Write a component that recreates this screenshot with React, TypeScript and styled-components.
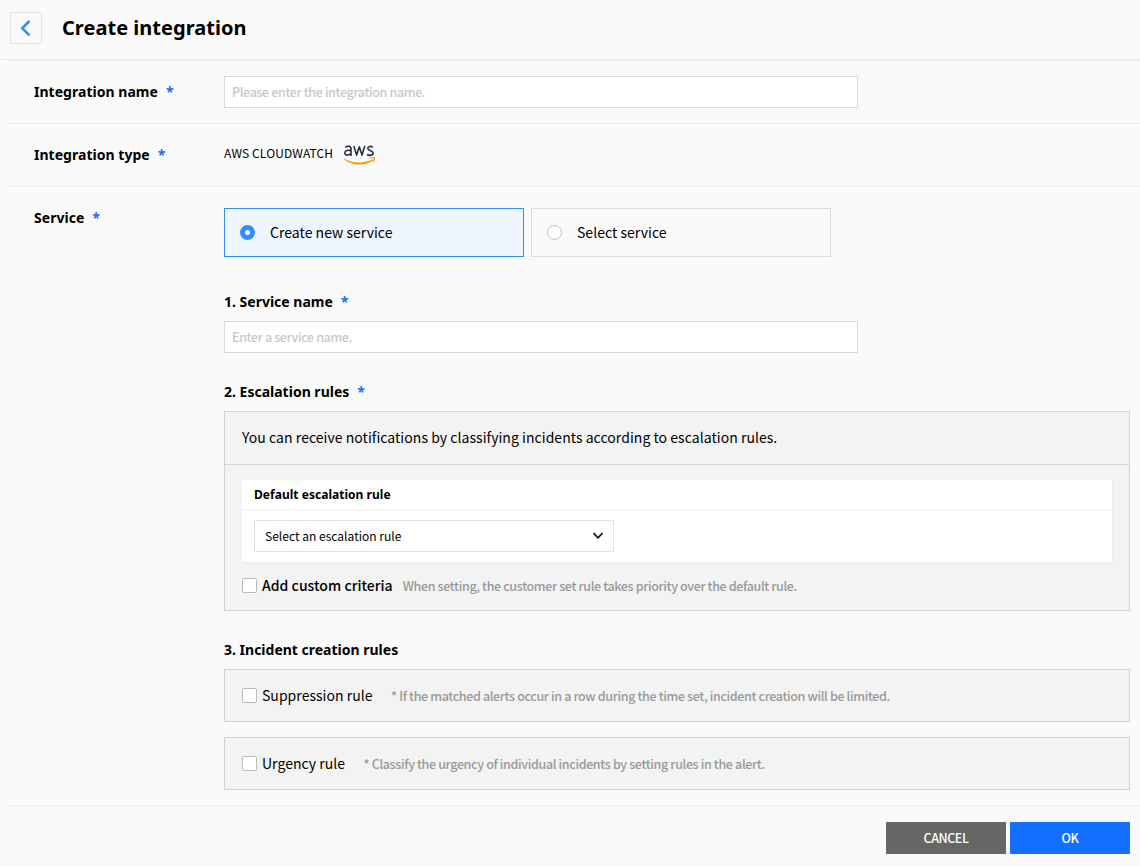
import React from 'react';
import styled, { createGlobalStyle } from 'styled-components';

const GlobalStyle = createGlobalStyle`
  *, *::before, *::after { box-sizing: border-box; }
  body {
    margin: 0;
    background: #fafafa;
    color: #000;
    font-family: 'Noto Sans CJK KR', 'Noto Sans', sans-serif;
    font-size: 14px;
  }
  input, button { font-family: inherit; }
`;

const Page = styled.div`
  width: 1140px;
  height: 866px;
  background: #fafafa;
  overflow: hidden;
`;

const Header = styled.header`
  display: flex;
  height: 60px;
  padding: 12px 10px 0;
  border-bottom: 1px solid #ebebeb;
`;

const BackButton = styled.button`
  display: flex;
  align-items: center;
  justify-content: center;
  width: 32px;
  height: 32px;
  padding: 0;
  border: 1px solid #e5e5e5;
  background: #fafafa;
`;

const PageTitle = styled.h1`
  margin: 0 0 0 20px;
  font: 700 20px/32px 'Noto Sans', sans-serif;
  letter-spacing: 0.03px;
`;

const Form = styled.main`
  margin-left: 9px;
  border-top: 1px solid #ebebeb;
`;

const Row = styled.section<{ $height: number }>`
  display: flex;
  height: ${(p) => p.$height}px;
  border-bottom: 1px solid #ebebeb;
`;

const RowLabel = styled.div`
  flex: none;
  width: 215px;
  padding: 20px 0 0 25px;
  font: 700 14px/22px 'Noto Sans', sans-serif;
  letter-spacing: 0.03px;
`;

const RowBody = styled.div`
  flex: 1;
  padding: 15px 10px 0 0;
`;

const Required = styled.span`
  margin-left: 8px;
  color: #1a6cff;
`;

const TextInput = styled.input`
  display: block;
  width: 634px;
  height: 32px;
  padding: 0 7px 1px;
  border: 1px solid #d9d9d9;
  border-radius: 0;
  background: #fff;
  font-size: 12.5px;
  letter-spacing: -0.36px;
  &::placeholder { color: #c8c8c8; font-weight: 500; }
`;

const TypeValue = styled.div`
  display: flex;
  height: 32px;
  align-items: flex-start;
  font-size: 12px;
  line-height: 28px;
  letter-spacing: 0.12px;
  gap: 10px;
  svg { margin-top: 4px; }
`;

const Choices = styled.div`
  display: flex;
  gap: 7px;
  margin-top: 6px;
`;

const Choice = styled.div<{ $active?: boolean }>`
  display: flex;
  align-items: center;
  width: 300px;
  height: 49px;
  padding-left: 15px;
  gap: 15px;
  font-size: 14px;
  letter-spacing: 0.03px;
  border: 1px solid ${(p) => (p.$active ? '#2a8ff7' : '#dcdcdc')};
  background: ${(p) => (p.$active ? '#eff5ff' : '#fafafa')};
`;

const ChoiceLabel = styled.span`
  padding-bottom: 2px;
`;

const Radio = styled.span<{ $active?: boolean }>`
  width: 15px;
  height: 15px;
  border-radius: 50%;
  border: ${(p) => (p.$active ? '5px solid #2f90f8' : '1px solid #bfbfbf')};
  background: #fff;
`;

const SectionTitle = styled.h2<{ $top: number }>`
  margin: ${(p) => p.$top}px 0 8px;
  font: 700 14px/22px 'Noto Sans', sans-serif;
`;

const Panel = styled.div`
  border: 1px solid #d2d2d2;
  background: #f3f3f3;
  & + & { margin-top: 15px; }
`;

const PanelIntro = styled.p`
  margin: 0;
  height: 53px;
  padding-left: 17px;
  border-bottom: 1px solid #d7d7d7;
  font-size: 14px;
  line-height: 51px;
  letter-spacing: 0.045px;
`;

const PanelContent = styled.div`
  height: 145px;
  padding: 15px 17px 0;
`;

const RuleCard = styled.div`
  height: 82px;
  background: #fff;
  box-shadow: 1px 1px 1px rgba(0, 0, 0, 0.03);
`;

const RuleCardTitle = styled.h3`
  margin: 0;
  height: 30px;
  padding-left: 12px;
  border-bottom: 1px solid #f0f0f0;
  font: 700 12px/29px 'Noto Sans', sans-serif;
  letter-spacing: 0.03px;
`;

const SelectBox = styled.div`
  display: flex;
  align-items: flex-start;
  justify-content: space-between;
  width: 360px;
  height: 32px;
  margin: 10px 0 0 12px;
  padding: 0 9px 0 10px;
  border: 1px solid #e3e3e3;
  font-size: 12px;
  line-height: 30px;
  letter-spacing: 0.02px;
  svg { margin-top: 11px; }
`;

const CheckRow = styled.label<{ $height: number }>`
  display: flex;
  align-items: center;
  height: ${(p) => p.$height}px;
`;

const PanelCheckRow = styled(CheckRow)`
  padding-left: 17px;
`;

const Checkbox = styled.span`
  width: 15px;
  height: 15px;
  border: 1px solid #bababa;
  border-radius: 2px;
  background: #fff;
`;

const CheckLabel = styled.span<{ $weight?: number }>`
  margin-left: 5px;
  padding-bottom: 2px;
  font-size: 14px;
  letter-spacing: 0.03px;
  font-weight: ${(p) => p.$weight ?? 400};
`;

const Hint = styled.span<{ $gap: number }>`
  margin-left: ${(p) => p.$gap}px;
  padding-bottom: 1px;
  color: #999;
  font-size: 12.5px;
  font-weight: 500;
  letter-spacing: -0.355px;
`;

const Footer = styled.footer`
  display: flex;
  justify-content: flex-end;
  gap: 4px;
  padding: 16px 10px 0;
`;

const ActionButton = styled.button<{ $primary?: boolean }>`
  width: 120px;
  height: 32px;
  padding: 0 0 2px;
  border: 0;
  background: ${(p) => (p.$primary ? '#146eff' : '#666')};
  color: #fff;
  font-size: 12.5px;
  font-weight: 500;
  letter-spacing: -0.45px;
`;

const AwsLogo = () => (
  <svg width="33" height="24" viewBox="0 0 33 24" fill="none">
    <g stroke="#252f3e" strokeWidth="1.6" strokeLinejoin="round">
      <path d="M2.2 4.3C4.2 2.8 8 2.6 8 5.9V12.9M8 7.6C5 6.9 1.8 7.2 1.8 9.9C1.8 13 6.8 12.6 8 10" />
      <path d="M10.8 3L13.6 12.1L16.3 3.8L19 12.1L21.8 3" />
      <path d="M29.9 4.1C27.8 2.9 24.8 3.2 24.8 5.3C24.8 8.2 30.1 7.1 30.1 9.9C30.1 12.8 26.1 12.8 24 11.5" />
    </g>
    <path d="M.9 15.5C9.4 20.6 19.4 20.7 28.7 16.7C29.7 16.3 30.4 17.3 29.4 18C21.4 23.2 8.4 22.9.6 16.1C.2 15.7.5 15.3.9 15.5Z" fill="#ff9900" />
    <path d="M26.1 15C28.2 13.6 31.6 13.8 32 14.4C32.4 15 31.7 18.3 29.9 19.8C29.6 20.1 29.3 19.9 29.5 19.6C29.9 18.6 30.8 16.3 30.4 15.7C30 15.1 27.4 15.4 26.3 15.5C25.9 15.6 25.8 15.2 26.1 15Z" fill="#ff9900" />
  </svg>
);

export default function App() {
  return (
    <>
      <GlobalStyle />
      <Page>
        <Header>
          <BackButton aria-label="Back">
            <svg width="12" height="18" viewBox="0 0 12 18" fill="none">
              <path d="M9.5 2L2.2 9.2L9.5 16.4" stroke="#2f90f8" strokeWidth="2.6" />
            </svg>
          </BackButton>
          <PageTitle>Create integration</PageTitle>
        </Header>
        <Form>
          <Row $height={63}>
            <RowLabel>Integration name<Required>*</Required></RowLabel>
            <RowBody><TextInput placeholder="Please enter the integration name." /></RowBody>
          </Row>
          <Row $height={63}>
            <RowLabel>Integration type<Required>*</Required></RowLabel>
            <RowBody>
              <TypeValue>AWS CLOUDWATCH<AwsLogo /></TypeValue>
            </RowBody>
          </Row>
          <Row $height={619}>
            <RowLabel>Service<Required>*</Required></RowLabel>
            <RowBody>
              <Choices>
                <Choice $active><Radio $active /><ChoiceLabel>Create new service</ChoiceLabel></Choice>
                <Choice><Radio /><ChoiceLabel>Select service</ChoiceLabel></Choice>
              </Choices>
              <SectionTitle $top={34}>1. Service name<Required>*</Required></SectionTitle>
              <TextInput placeholder="Enter a service name." />
              <SectionTitle $top={28}>2. Escalation rules<Required>*</Required></SectionTitle>
              <Panel>
                <PanelIntro>You can receive notifications by classifying incidents according to escalation rules.</PanelIntro>
                <PanelContent>
                  <RuleCard>
                    <RuleCardTitle>Default escalation rule</RuleCardTitle>
                    <SelectBox>
                      Select an escalation rule
                      <svg width="12" height="8" viewBox="0 0 12 8" fill="none">
                        <path d="M1.5 1.2L6 5.8L10.5 1.2" stroke="#111" strokeWidth="1.7" />
                      </svg>
                    </SelectBox>
                  </RuleCard>
                  <CheckRow $height={47}>
                    <Checkbox />
                    <CheckLabel $weight={500}>Add custom criteria</CheckLabel>
                    <Hint $gap={10}>When setting, the customer set rule takes priority over the default rule.</Hint>
                  </CheckRow>
                </PanelContent>
              </Panel>
              <SectionTitle $top={28}>3. Incident creation rules</SectionTitle>
              <Panel>
                <PanelCheckRow $height={51}>
                  <Checkbox />
                  <CheckLabel>Suppression rule</CheckLabel>
                  <Hint $gap={18.5}>* If the matched alerts occur in a row during the time set, incident creation will be limited.</Hint>
                </PanelCheckRow>
              </Panel>
              <Panel>
                <PanelCheckRow $height={51}>
                  <Checkbox />
                  <CheckLabel>Urgency rule</CheckLabel>
                  <Hint $gap={18.5}>* Classify the urgency of individual incidents by setting rules in the alert.</Hint>
                </PanelCheckRow>
              </Panel>
            </RowBody>
          </Row>
        </Form>
        <Footer>
          <ActionButton>CANCEL</ActionButton>
          <ActionButton $primary>OK</ActionButton>
        </Footer>
      </Page>
    </>
  );
}
